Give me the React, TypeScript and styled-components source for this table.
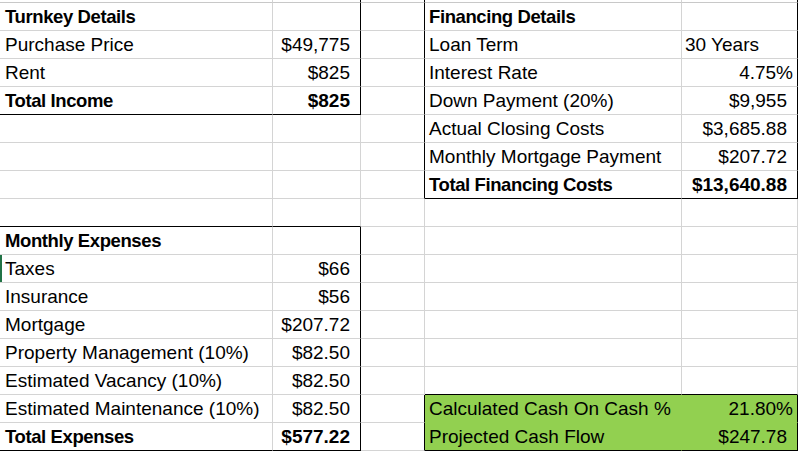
import React from "react";
import styled, { createGlobalStyle } from "styled-components";

const GlobalStyle = createGlobalStyle`
  html, body {
    margin: 0;
    padding: 0;
    background: #ffffff;
  }
`;

const GRID = "#d4d4d4";
const BLACK = "#000000";
const GREEN = "#92d050";

type Kind = "text" | "money" | "pct" | "left";

type CellData = {
  v?: string;
  kind?: Kind;
  bold?: boolean;
};

const Sheet = styled.div`
  display: grid;
  grid-template-columns: 273px 88px 64px 257px 116px;
  grid-template-rows: 3px repeat(16, 28px);
  width: 798px;
  height: 451px;
  overflow: hidden;
  background: #ffffff;
  font-family: "Liberation Sans", Arial, sans-serif;
  color: #000000;
`;

type CellProps = {
  $right: string;
  $bottom: string;
  $fill: string;
  $kind: Kind;
  $first: boolean;
  $mark: boolean;
};

const padFor = (k: Kind, first: boolean) => {
  if (k === "money") return "0 10px 0 0";
  if (k === "pct") return "0 4px 0 0";
  if (k === "left") return "0 0 0 3px";
  return first ? "0 0 0 5px" : "0 0 0 4px";
};

const Cell = styled.div<CellProps>`
  box-sizing: border-box;
  display: flex;
  align-items: flex-end;
  justify-content: ${(p) =>
    p.$kind === "money" || p.$kind === "pct" ? "flex-end" : "flex-start"};
  padding: ${(p) => padFor(p.$kind, p.$first)};
  border-right: 1px solid ${(p) => p.$right};
  border-bottom: 1px solid ${(p) => p.$bottom};
  background: ${(p) => p.$fill};
  box-shadow: ${(p) => (p.$mark ? "inset 2px 0 0 #217346" : "none")};
  overflow: hidden;
  white-space: nowrap;
  min-width: 0;
`;

const Value = styled.span<{ $bold: boolean; $num: boolean }>`
  display: block;
  line-height: 26px;
  font-size: ${(p) => (p.$bold && !p.$num ? "18.5px" : "19px")};
  font-weight: ${(p) => (p.$bold ? 700 : 400)};
  letter-spacing: ${(p) => (p.$bold && !p.$num ? "-0.4px" : "0")};
`;

const t = (v: string, bold = false): CellData => ({ v, kind: "text", bold });
const m = (v: string, bold = false): CellData => ({ v, kind: "money", bold });
const pc = (v: string): CellData => ({ v, kind: "pct" });
const e: CellData = {};

// rows 1..16 (row 0 is the sliver above)
const rows: CellData[][] = [
  [t("Turnkey Details", true), e, e, t("Financing Details", true), e],
  [t("Purchase Price"), m("$49,775"), e, t("Loan Term"), { v: "30 Years", kind: "left" }],
  [t("Rent"), m("$825"), e, t("Interest Rate"), pc("4.75%")],
  [t("Total Income", true), m("$825", true), e, t("Down Payment (20%)"), m("$9,955")],
  [e, e, e, t("Actual Closing Costs"), m("$3,685.88")],
  [e, e, e, t("Monthly Mortgage Payment"), m("$207.72")],
  [e, e, e, t("Total Financing Costs", true), m("$13,640.88", true)],
  [e, e, e, e, e],
  [t("Monthly Expenses", true), e, e, e, e],
  [t("Taxes"), m("$66"), e, e, e],
  [t("Insurance"), m("$56"), e, e, e],
  [t("Mortgage"), m("$207.72"), e, e, e],
  [t("Property Management (10%)"), m("$82.50"), e, e, e],
  [t("Estimated Vacancy (10%)"), m("$82.50"), e, e, e],
  [t("Estimated Maintenance (10%)"), m("$82.50"), e, t("Calculated Cash On Cash %"), pc("21.80%")],
  [t("Total Expenses", true), m("$577.22", true), e, t("Projected Cash Flow"), m("$247.78")],
];

const inRange = (r: number, a: number, b: number) => r >= a && r <= b;

const isGreen = (r: number, c: number) => c >= 3 && inRange(r, 15, 16);

const rightColor = (r: number, c: number) => {
  if (c === 1 && (inRange(r, 0, 4) || inRange(r, 9, 16))) return BLACK;
  if (c === 2 && (inRange(r, 0, 7) || inRange(r, 15, 16))) return BLACK;
  if (c === 4 && (inRange(r, 0, 7) || inRange(r, 15, 16))) return BLACK;
  if (c === 3 && isGreen(r, c)) return GREEN;
  return GRID;
};

const bottomColor = (r: number, c: number) => {
  if (c <= 1 && (r === 4 || r === 8 || r === 16)) return BLACK;
  if (c >= 3 && (r === 7 || r === 14 || r === 16)) return BLACK;
  if (isGreen(r, c) && r === 15) return GREEN;
  if (r === 0) return "#c8c8c8";
  return GRID;
};

export default function App() {
  const all: CellData[][] = [[e, e, e, e, e], ...rows];
  return (
    <>
      <GlobalStyle />
      <Sheet>
        {all.map((row, r) =>
          row.map((cell, c) => {
            const kind = cell.kind ?? "text";
            return (
              <Cell
                key={`${r}-${c}`}
                $right={rightColor(r, c)}
                $bottom={bottomColor(r, c)}
                $fill={isGreen(r, c) ? GREEN : "#ffffff"}
                $kind={kind}
                $first={c === 0}
                $mark={r === 10 && c === 0}
              >
                {cell.v && (
                  <Value
                    $bold={!!cell.bold}
                    $num={kind === "money" || kind === "pct"}
                  >
                    {cell.v}
                  </Value>
                )}
              </Cell>
            );
          })
        )}
      </Sheet>
    </>
  );
}
